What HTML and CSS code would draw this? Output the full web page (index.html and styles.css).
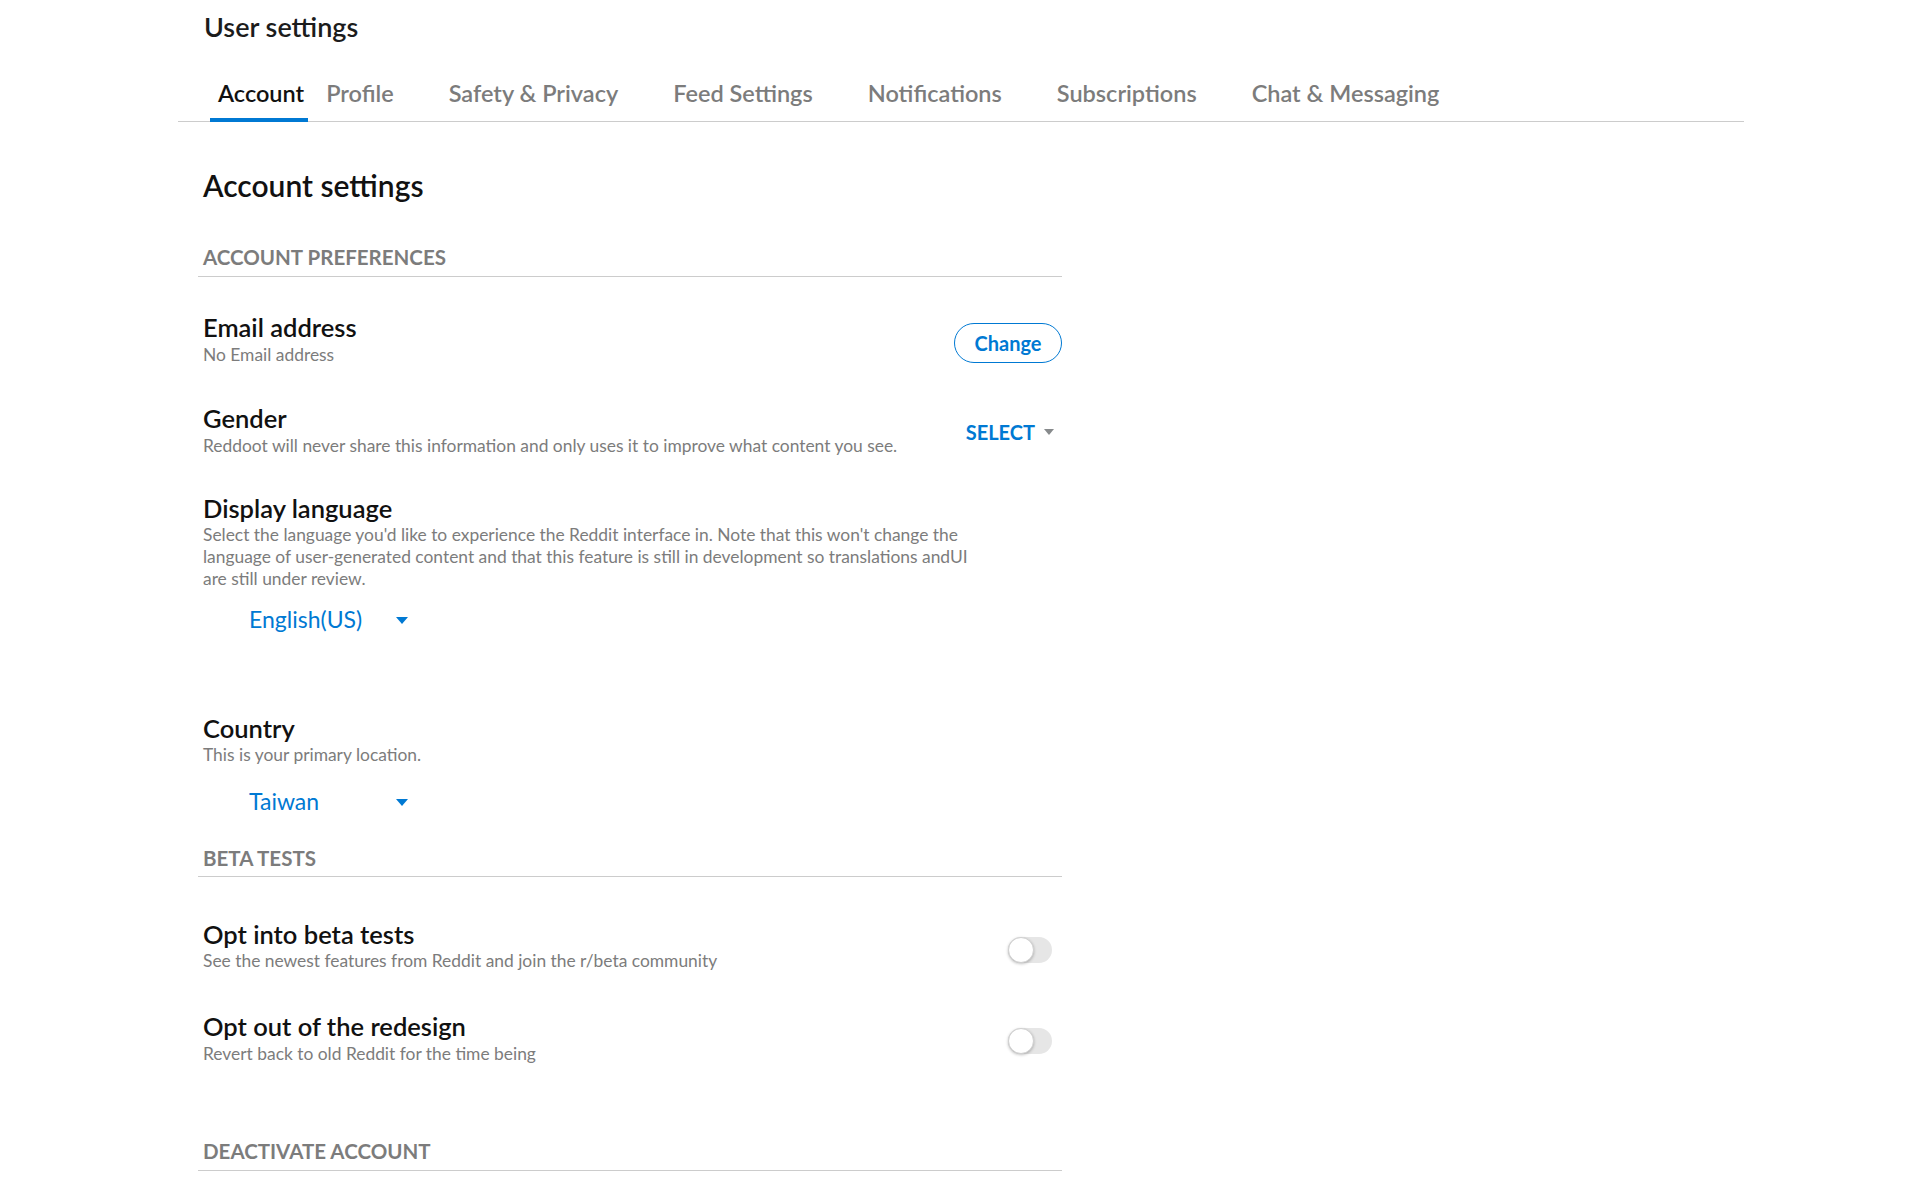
FILE: index.html
```html
<!DOCTYPE html>
<html lang="en">
<head>
<meta charset="utf-8">
<title>User settings</title>
<link rel="stylesheet" href="styles.css">
</head>
<body>
<div class="page">
  <h1 class="page-title">User settings</h1>
  <nav class="tabs">
    <a class="tab active">Account</a>
    <a class="tab tab-profile">Profile</a>
    <a class="tab">Safety &amp; Privacy</a>
    <a class="tab">Feed Settings</a>
    <a class="tab">Notifications</a>
    <a class="tab">Subscriptions</a>
    <a class="tab">Chat &amp; Messaging</a>
  </nav>
  <main class="content">
    <h2 class="content-title">Account settings</h2>

    <h3 class="section-label label-prefs">ACCOUNT PREFERENCES</h3>

    <div class="row row-email">
      <div class="row-text">
        <div class="row-heading">Email address</div>
        <div class="row-sub">No Email address</div>
      </div>
      <button class="btn-change">Change</button>
    </div>

    <div class="row row-gender">
      <div class="row-text">
        <div class="row-heading">Gender</div>
        <div class="row-sub">Reddoot will never share this information and only uses it to improve what content you see.</div>
      </div>
      <div class="select-btn">SELECT <span class="caret-gray"></span></div>
    </div>

    <div class="block block-lang">
      <div class="row-heading">Display language</div>
      <div class="row-sub desc">Select the language you'd like to experience the Reddit interface in. Note that this won't change the<br>language of user-generated content and that this feature is still in development so translations andUI<br>are still under review.</div>
      <div class="dropdown dd-lang"><span>English(US)</span><span class="caret-blue"></span></div>
    </div>

    <div class="block block-country">
      <div class="row-heading">Country</div>
      <div class="row-sub">This is your primary location.</div>
      <div class="dropdown dd-country"><span>Taiwan</span><span class="caret-blue"></span></div>
    </div>

    <h3 class="section-label label-beta">BETA TESTS</h3>

    <div class="row row-beta">
      <div class="row-text">
        <div class="row-heading">Opt into beta tests</div>
        <div class="row-sub">See the newest features from Reddit and join the r/beta community</div>
      </div>
      <div class="toggle"><span class="knob"></span></div>
    </div>

    <div class="row row-redesign">
      <div class="row-text">
        <div class="row-heading">Opt out of the redesign</div>
        <div class="row-sub">Revert back to old Reddit for the time being</div>
      </div>
      <div class="toggle"><span class="knob"></span></div>
    </div>

    <h3 class="section-label label-deact">DEACTIVATE ACCOUNT</h3>
  </main>
</div>
</body>
</html>
```
FILE: styles.css
```css
* { box-sizing: border-box; }
html, body { margin: 0; padding: 0; background: #ffffff; }
body {
  font-family: Lato, "Noto Sans", "Liberation Sans", sans-serif;
  color: #1c1c1c;
  height: 1193px;
  overflow: hidden;
}
.page {
  margin-left: 178px;
  width: 1566px;
}
.page-title {
  margin: 0;
  padding: 11px 0 0 26px;
  height: 54px;
  font-size: 27px;
  line-height: 32px;
  font-weight: 600;
  color: #1c1c1c;
}
.tabs {
  display: flex;
  height: 68px;
  border-bottom: 1px solid #cccccc;
  padding-left: 32px;
}
.tab {
  position: relative;
  display: block;
  padding-top: 12px;
  line-height: 55px;
  height: 67px;
  font-size: 23.5px;
  font-weight: 600;
  color: #7c7c7c;
  margin-left: 55px;
  cursor: pointer;
  white-space: nowrap;
}
.tab.active {
  color: #111111;
  margin-left: 0;
  padding-left: 8px;
  padding-right: 4px;
}
.tab.active::after {
  content: "";
  position: absolute;
  left: 0;
  right: 0;
  bottom: -1px;
  height: 4px;
  background: #0079d3;
}
.tab.tab-profile { margin-left: 18px; }

.content {
  margin-left: 20px;
  width: 864px;
}
.content-title {
  margin: 49px 0 0;
  padding-left: 5px;
  font-size: 30px;
  line-height: 28px;
  font-weight: 600;
  color: #111111;
}
.section-label {
  margin: 0;
  padding: 0 0 7px 5px;
  font-size: 20.5px;
  line-height: 24px;
  font-weight: 700;
  color: #7c7c7c;
  border-bottom: 1px solid #cccccc;
}
.label-prefs { margin-top: 46px; }
.label-beta { margin-top: 31px; padding-bottom: 6px; }
.label-deact { margin-top: 74px; padding-bottom: 7px; }

.row {
  display: flex;
  align-items: center;
  justify-content: space-between;
  padding: 0 0 0 5px;
}
.row-heading {
  font-size: 25.5px;
  line-height: 28px;
  font-weight: 600;
  color: #111111;
  white-space: nowrap;
}
.row-sub {
  margin-top: 3px;
  font-size: 17.4px;
  line-height: 22px;
  font-weight: 400;
  color: #7c7c7c;
  white-space: nowrap;
}
.row-email { margin-top: 36px; }
.row-gender { margin-top: 38px; }

.btn-change {
  width: 108px;
  height: 40px;
  border: 1px solid #0079d3;
  border-radius: 20px;
  background: #ffffff;
  color: #0079d3;
  font-family: inherit;
  font-size: 20px;
  font-weight: 700;
  padding: 0;
  margin-top: 6px;
}
.select-btn {
  display: flex;
  align-items: center;
  gap: 9px;
  margin-right: 8px;
  margin-top: 2px;
  color: #0079d3;
  font-size: 20px;
  font-weight: 700;
}
.caret-gray {
  width: 0;
  height: 0;
  border-left: 5.5px solid transparent;
  border-right: 5.5px solid transparent;
  border-top: 6px solid #878a8c;
}
.block { padding-left: 5px; }
.block-lang { margin-top: 37px; }
.block-lang .desc { margin-top: 2px; }
.block-country { margin-top: 81px; }
.block-country .row-sub { margin-top: 2px; }

.dropdown {
  display: flex;
  align-items: center;
  justify-content: space-between;
  width: 159px;
  margin-left: 46px;
  font-size: 23px;
  line-height: 28px;
  color: #0079d3;
}
.dd-lang { margin-top: 15px; }
.dd-country { margin-top: 21px; }
.caret-blue {
  width: 0;
  height: 0;
  border-left: 6.5px solid transparent;
  border-right: 6.5px solid transparent;
  border-top: 7px solid #0079d3;
  margin-top: 2px;
}

.row-beta { margin-top: 43px; }
.row-beta .row-sub { margin-top: 2px; }
.row-redesign { margin-top: 40px; }

.toggle {
  position: relative;
  width: 44px;
  height: 26px;
  border-radius: 13px;
  background: #e6e6e6;
  margin-right: 10px;
  margin-top: 8px;
}
.row-redesign .toggle { margin-top: 4px; }
.knob {
  position: absolute;
  left: 0;
  top: 0;
  width: 26px;
  height: 26px;
  border-radius: 50%;
  background: #ffffff;
  border: 1px solid #d0d0d0;
  box-shadow: 0 1px 3px rgba(0, 0, 0, 0.25);
}
```
